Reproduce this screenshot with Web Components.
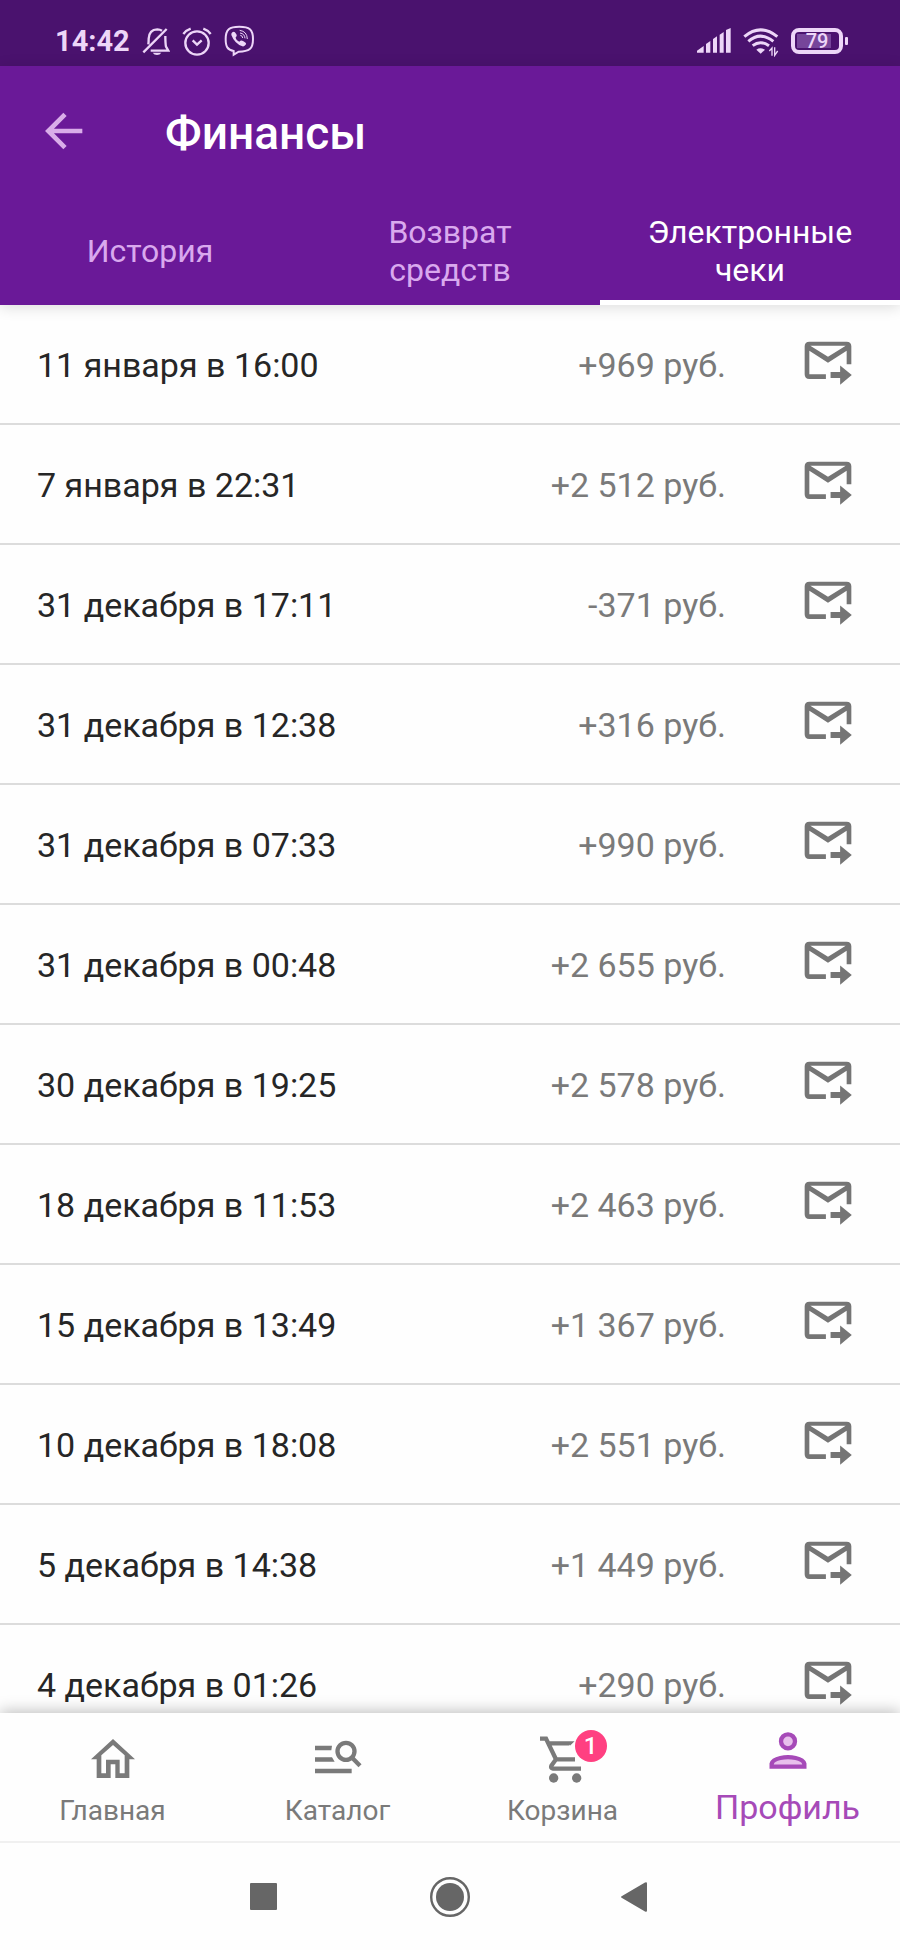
<!DOCTYPE html>
<html lang="ru">
<head>
<meta charset="utf-8">
<meta name="viewport" content="width=device-width, initial-scale=1">
<title>Финансы</title>
<style>
  body { margin: 0; font-family: Roboto, "Noto Sans", sans-serif; background: #fefefe; color: #262626; }
</style>
</head>
<body>
<finance-app></finance-app>

<template id="finance-app">
  <style>
    :host { display: flex; flex-direction: column; height: 100vh; }
    receipt-list { flex: 1; min-height: 0; overflow: hidden; }
  </style>
  <status-bar></status-bar>
  <app-header>Финансы
    <tab-bar slot="tabs">
      <tab-item>История</tab-item>
      <tab-item>Возврат средств</tab-item>
      <tab-item selected>Электронные чеки</tab-item>
    </tab-bar>
  </app-header>
  <receipt-list></receipt-list>
  <bottom-nav>
    <nav-item icon="home">Главная</nav-item>
    <nav-item icon="catalog">Каталог</nav-item>
    <nav-item icon="cart" badge="1">Корзина</nav-item>
    <nav-item icon="profile" active>Профиль</nav-item>
  </bottom-nav>
  <system-nav></system-nav>
</template>

<template id="status-bar">
  <style>
    :host { display: flex; align-items: center; justify-content: space-between; box-sizing: border-box;
      height: 66px; padding: 16px 52px 0 55px; background: #4a126e; color: #edd6f8; }
    .group { display: flex; align-items: center; gap: 12px; }
    .time { font-size: 29px; line-height: 32px; font-weight: 700; }
    svg { display: block; height: 32px; fill: none; stroke: currentColor; stroke-width: 7; }
    .solid { fill: currentColor; stroke: none; }
    .battery { display: flex; align-items: center; gap: 2px; }
    .cell { box-sizing: border-box; width: 52px; height: 26px; border: 4px solid currentColor; border-radius: 8px;
      background: linear-gradient(90deg, #76459a 34px, transparent 34px) 2px 2px / 40px 14px no-repeat content-box;
      font-size: 20px; line-height: 18px; font-weight: 500; text-align: center; color: #edd6f8; }
    .tip { width: 3px; height: 8px; border-radius: 1px; background: currentColor; }
  </style>
  <div class="group">
    <span class="time">14:42</span>
    <svg width="28" viewBox="426 75 84 96" role="img" aria-label="Без звука">
      <path d="M430 157 500 87M445 133Q446 126 446 116Q447 89 472 88Q480 88 486 92M496 108Q496 130 498 140L505 152H452"/>
      <path class="solid" d="M458 158H484Q480 165 471 165Q462 165 458 158Z"/>
    </svg>
    <svg width="30" viewBox="547 75 90 96" role="img" aria-label="Будильник">
      <circle cx="592" cy="129" r="35"/><path d="M579 121 592 134 606 121M551 102Q559 91 573 86M633 102Q625 91 611 86"/>
    </svg>
    <svg width="31" viewBox="672 75 93 96" role="img" aria-label="Viber">
      <path stroke-width="6" d="M718 80C748 80 759 88 759 117C759 147 748 155 716 155L701 164V153C682 149 677 140 677 117C677 88 688 80 718 80Z"/>
      <path class="solid" d="M697 97Q703 92 708 101Q713 107 707 112Q707 120 718 125Q723 119 729 123Q740 129 738 133Q733 141 727 139Q704 131 694 105Q693 100 697 97Z"/>
      <path stroke-width="3" d="M719 91Q741 94 742 117M720 99Q734 101 735 115M721 106Q728 107 728 114"/>
    </svg>
  </div>
  <div class="group">
    <svg class="solid" width="34" viewBox="735 75 102 96" role="img" aria-label="Сигнал">
      <path d="M735 158V152L755 138V158ZM762 158V132L775 123V158ZM783 158V117L795 109V158ZM803 158V104L815 96V158ZM822 158V90L836 84V158Z"/>
    </svg>
    <svg width="36" viewBox="875 75 108 96" role="img" aria-label="Wi-Fi">
      <path stroke-width="9" d="M879 110Q927 69 978 110M891 124Q927 93 966 124M904 137Q927 119 953 137"/>
      <path class="solid" d="M915 149Q927 141 941 149L928 161Z"/>
      <path stroke-width="4" d="M954 153 962 144V167M970 142V166L979 153"/>
    </svg>
    <div class="battery"><div class="cell">79</div><div class="tip"></div></div>
  </div>
</template>

<template id="app-header">
  <style>
    :host { display: block; position: relative; z-index: 1; background: #6a1998; box-shadow: 0 2px 14px rgba(0,0,0,.14); }
    .bar { display: flex; align-items: center; gap: 76px; height: 134px; padding: 0 39px; box-sizing: border-box; }
    button { display: block; padding: 0; border: 0; background: none; color: #d9ade9; }
    svg { display: block; fill: none; stroke: currentColor; stroke-width: 14; }
    h1 { margin: 0; font-size: 46px; line-height: 56px; font-weight: 500; color: #fff; }
  </style>
  <div class="bar">
    <button type="button" aria-label="Назад">
      <svg width="50" height="50" viewBox="118 324 150 150"><path d="M248 393H147M196 343 146 393 196 443"/></svg>
    </button>
    <h1><slot></slot></h1>
  </div>
  <slot name="tabs"></slot>
</template>

<template id="tab-bar">
  <style>:host { display: grid; grid-template-columns: repeat(3, 1fr); height: 105px; }</style>
  <slot></slot>
</template>

<template id="tab-item">
  <style>
    :host { display: grid; }
    button { padding: 2px 40px 0; border: 0; border-bottom: 5px solid transparent; background: none;
      font: 400 32px/38px Roboto, "Noto Sans", sans-serif; color: #d9a9ee; }
    :host([selected]) button { color: #fff; border-color: #fff; }
  </style>
  <button type="button" role="tab"><slot></slot></button>
</template>

<template id="receipt-row">
  <style>
    :host { display: grid; grid-template-columns: 1fr auto 56px; align-items: center; column-gap: 74px;
      box-sizing: border-box; height: 120px; padding: 2px 44px 0 37px; border-bottom: 2px solid #dcdcdc;
      font-size: 34px; line-height: 40px; }
    .amount { color: #7a7a7a; }
    button { display: block; padding: 0; border: 0; background: none; color: #757575; }
    svg { display: block; fill: currentColor; }
  </style>
  <slot name="date"></slot>
  <span class="amount"><slot name="amount"></slot></span>
  <button type="button" aria-label="Отправить чек на почту">
    <svg width="56" height="56" viewBox="0 2 24 24">
      <path fill-rule="evenodd" d="M4 4H20Q22 4 22 6V13.7H20V7.9L12 13 4 7.9V18H11.1V20H4Q2 20 2 18V6Q2 4 4 4ZM4.4 5.8 12 10.500 19.6 5.8ZM13.1 17H17.2V14.2L22.2 18.3 17.2 22.500V19.6H13.1Z"/>
    </svg>
  </button>
</template>

<template id="bottom-nav">
  <style>
    :host { display: block; position: relative; z-index: 1; background: #fefefe; border-bottom: 2px solid #f0f0f0;
      box-shadow: 0 -2px 14px rgba(0,0,0,.25); }
    nav { display: grid; grid-template-columns: repeat(4, 1fr); height: 128px; }
  </style>
  <nav><slot></slot></nav>
</template>

<template id="nav-item">
  <style>
    :host { display: block; font-size: 28px; line-height: 38px; color: #7a7a7a; }
    a { display: flex; flex-direction: column; align-items: center; gap: 6px; padding-top: 19px;
      color: inherit; text-decoration: none; }
    .icon { position: relative; }
    svg { display: block; fill: none; stroke: currentColor; stroke-width: 13; }
    .badge { position: absolute; top: -2px; right: -12px; width: 32px; height: 32px; border-radius: 50%;
      background: #ff4081; color: #fff; font-size: 24px; line-height: 32px; text-align: center; font-weight: 500; }
    :host([active]) { color: #a64ab8; font-size: 34px; line-height: 30px; }
  </style>
  <a href="#"><span class="icon"></span><slot></slot></a>
</template>

<template id="system-nav">
  <style>
    :host { display: flex; justify-content: center; align-items: center; gap: 146px; position: relative; z-index: 2;
      height: 107px; background: #fefefe; }
    button { display: block; padding: 0; border: 0; background: none; color: #666; }
    svg { display: block; fill: currentColor; }
  </style>
  <button type="button" aria-label="Недавние"><svg width="40" height="42" viewBox="0 0 40 42"><rect x="6" y="7" width="27" height="27" rx="1"/></svg></button>
  <button type="button" aria-label="Домой"><svg width="40" height="42" viewBox="0 0 40 42"><circle cx="20" cy="21" r="14"/><circle cx="20" cy="21" r="18.8" fill="none" stroke="currentColor" stroke-width="2.4"/></svg></button>
  <button type="button" aria-label="Назад"><svg width="40" height="42" viewBox="0 0 40 42"><path d="M6 20 29 6.5Q31 5.500 31 7.500V34.500Q31 36.500 29 35.500L6 22Q4 21 6 20Z"/></svg></button>
</template>

<script>
const define = (name, setup) => customElements.define(name, class extends HTMLElement {
  constructor() {
    super();
    this.attachShadow({ mode: 'open' }).append(document.getElementById(name).content.cloneNode(true));
  }
  connectedCallback() { if (setup) setup(this, this.shadowRoot); }
});

const icons = {
  home: '<svg width="64" height="54" viewBox="242 335 192 162"><path fill="currentColor" stroke="none" fill-rule="evenodd" d="M338 356 404 417H387V473H345V432H331V473H289V417H272ZM338 374 303 405V459H317V418H358V459H373V405Z"/></svg>',
  catalog: '<svg width="64" height="54" viewBox="917 335 192 162"><path fill="currentColor" stroke="none" d="M944 376H995L993 390H944ZM944 411H995L1003 424H944ZM944 445H1054V459H944Z"/><circle cx="1037" cy="393" r="25.500"/><path d="M1054 411 1079 436"/></svg>',
  cart: '<svg width="64" height="54" viewBox="242 335 192 162"><path d="M269 355H287L318 419M296 369H357L355 371M311 417H365L374 417M316 418 303 436Q300 444 308 445H392"/><g fill="currentColor" stroke="none"><circle cx="310" cy="473" r="14"/><circle cx="379" cy="473" r="14"/></g></svg>',
  profile: '<svg width="64" height="54" viewBox="917 335 192 162"><g fill="#e8c0ec"><circle cx="1013" cy="363" r="21"/><path d="M964 439V430Q967 418 990 413Q1013 408 1036 413Q1059 418 1062 430V439Z"/></g></svg>'
};

const receipts = [
  ['11 января в 16:00', '+969 руб.'],
  ['7 января в 22:31', '+2 512 руб.'],
  ['31 декабря в 17:11', '-371 руб.'],
  ['31 декабря в 12:38', '+316 руб.'],
  ['31 декабря в 07:33', '+990 руб.'],
  ['31 декабря в 00:48', '+2 655 руб.'],
  ['30 декабря в 19:25', '+2 578 руб.'],
  ['18 декабря в 11:53', '+2 463 руб.'],
  ['15 декабря в 13:49', '+1 367 руб.'],
  ['10 декабря в 18:08', '+2 551 руб.'],
  ['5 декабря в 14:38', '+1 449 руб.'],
  ['4 декабря в 01:26', '+290 руб.']
];

define('status-bar');
define('app-header');
define('tab-bar', host => host.setAttribute('role', 'tablist'));
define('tab-item', (host, root) =>
  root.querySelector('button').setAttribute('aria-selected', host.hasAttribute('selected')));
define('receipt-row', host => host.setAttribute('role', 'listitem'));
define('bottom-nav');
define('nav-item', (host, root) => {
  const icon = root.querySelector('.icon');
  icon.innerHTML = icons[host.getAttribute('icon')];
  if (host.hasAttribute('badge')) {
    const badge = document.createElement('span');
    badge.className = 'badge';
    badge.textContent = host.getAttribute('badge');
    icon.append(badge);
  }
  if (host.hasAttribute('active')) root.querySelector('a').setAttribute('aria-current', 'page');
});
define('system-nav');

customElements.define('receipt-list', class extends HTMLElement {
  connectedCallback() {
    const root = this.attachShadow({ mode: 'open' });
    root.innerHTML = '<style>:host { display: block; background: #fefefe; }</style><div role="list">' +
      receipts.map(([date, amount]) =>
        `<receipt-row><span slot="date">${date}</span><span slot="amount">${amount}</span></receipt-row>`).join('') + '</div>';
  }
});
define('finance-app');
</script>
</body>
</html>
